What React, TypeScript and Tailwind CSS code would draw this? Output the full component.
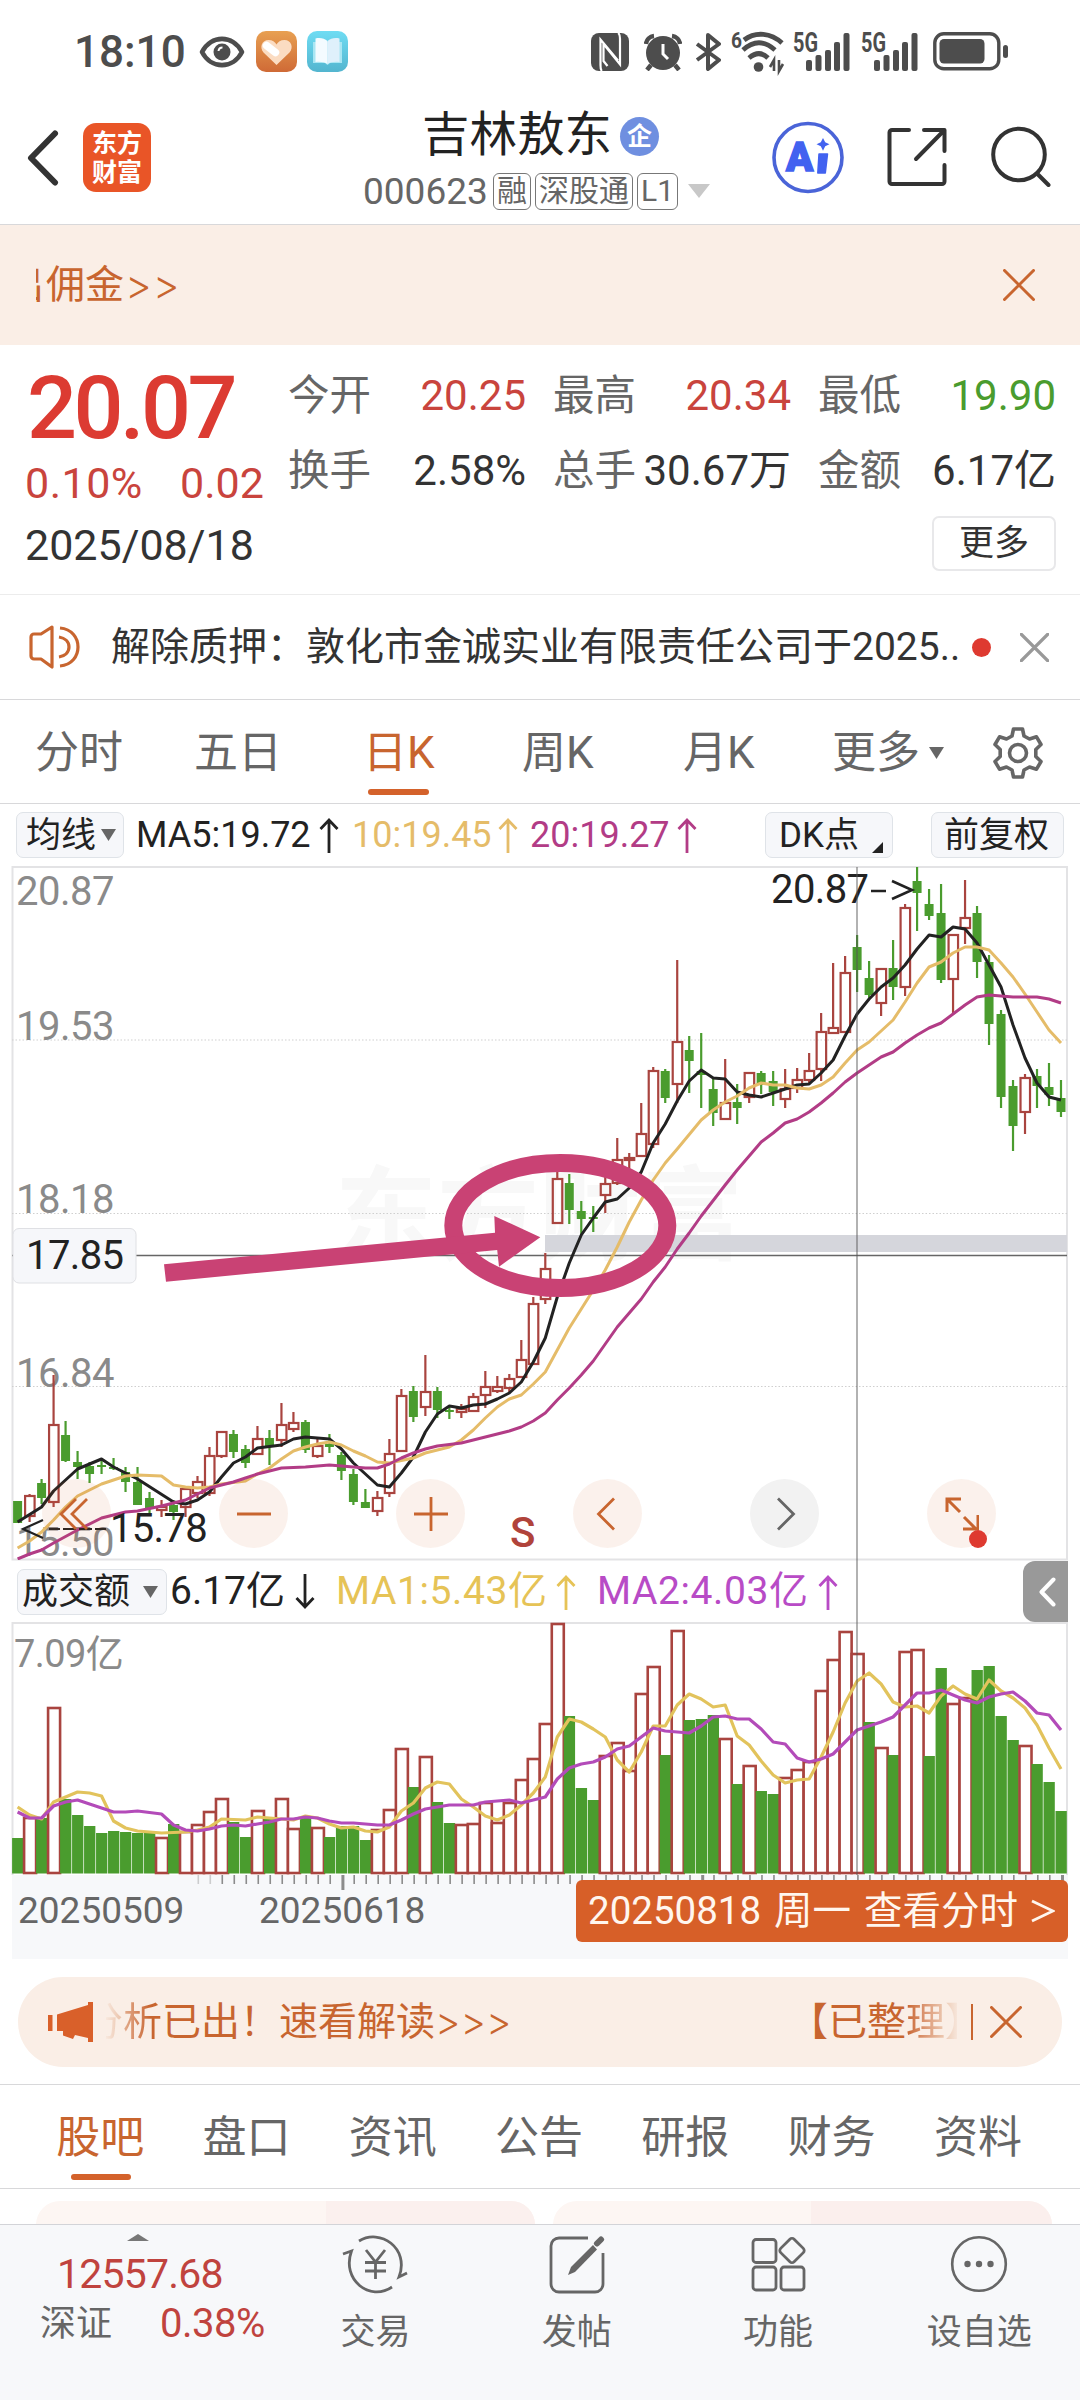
import { clsx } from 'clsx';

type Candle = [up: number, high: number, top: number, bottom: number, low: number];

// one entry per trading day, 1 = rising (hollow red), 0 = falling (solid green)
const candles: Candle[] = [
  [0, 1501, 1501, 1523, 1523], [1, 1494, 1496, 1516, 1522], [0, 1479, 1483, 1498, 1504], [1, 1375, 1425, 1502, 1507],
  [0, 1421, 1435, 1461, 1462], [0, 1451, 1462, 1467, 1479], [0, 1462, 1466, 1474, 1483], [0, 1460, 1465, 1467, 1474],
  [0, 1458, 1467, 1469, 1470], [0, 1467, 1472, 1482, 1492], [0, 1467, 1482, 1505, 1505], [0, 1492, 1498, 1508, 1516],
  [1, 1500, 1507, 1510, 1517], [0, 1500, 1505, 1512, 1520], [1, 1488, 1489, 1507, 1517], [1, 1476, 1482, 1493, 1498],
  [1, 1447, 1456, 1493, 1496], [1, 1432, 1432, 1456, 1458], [0, 1430, 1434, 1452, 1458], [0, 1445, 1449, 1463, 1468],
  [1, 1426, 1439, 1454, 1454], [0, 1430, 1438, 1446, 1465], [1, 1403, 1425, 1440, 1447], [1, 1412, 1423, 1429, 1432],
  [0, 1420, 1422, 1450, 1453], [1, 1438, 1446, 1456, 1458], [0, 1434, 1444, 1447, 1453], [0, 1452, 1455, 1471, 1480],
  [0, 1469, 1474, 1502, 1505], [0, 1489, 1502, 1508, 1508], [1, 1491, 1498, 1511, 1516], [1, 1439, 1454, 1493, 1497],
  [1, 1389, 1396, 1451, 1452], [0, 1386, 1391, 1417, 1422], [1, 1355, 1392, 1407, 1416], [0, 1387, 1391, 1410, 1418],
  [0, 1405, 1410, 1412, 1419], [1, 1404, 1409, 1412, 1418], [1, 1393, 1397, 1411, 1411], [1, 1371, 1387, 1395, 1408],
  [1, 1376, 1387, 1391, 1393], [1, 1374, 1379, 1388, 1392], [1, 1340, 1360, 1377, 1378], [1, 1297, 1304, 1364, 1364],
  [1, 1253, 1269, 1299, 1304], [1, 1170, 1179, 1223, 1223], [0, 1174, 1183, 1210, 1224], [0, 1201, 1211, 1219, 1235],
  [0, 1206, 1217, 1219, 1232], [1, 1177, 1184, 1195, 1213], [1, 1138, 1160, 1183, 1185], [1, 1153, 1158, 1160, 1173],
  [1, 1103, 1134, 1156, 1156], [1, 1067, 1071, 1144, 1148], [0, 1069, 1071, 1098, 1103], [1, 960, 1042, 1084, 1103],
  [0, 1036, 1050, 1061, 1093], [0, 1033, 1071, 1075, 1108], [0, 1077, 1089, 1113, 1126], [1, 1059, 1103, 1119, 1120],
  [0, 1084, 1102, 1108, 1124], [1, 1072, 1073, 1097, 1103], [0, 1071, 1073, 1085, 1094], [0, 1071, 1081, 1092, 1106],
  [1, 1069, 1089, 1099, 1108], [1, 1068, 1080, 1088, 1093], [1, 1053, 1071, 1080, 1083], [1, 1013, 1032, 1069, 1081],
  [1, 963, 1028, 1033, 1033], [1, 956, 973, 1032, 1032], [0, 935, 947, 970, 992], [0, 961, 978, 995, 1000],
  [1, 968, 969, 1003, 1016], [0, 940, 968, 987, 1000], [1, 904, 908, 987, 996], [0, 867, 881, 893, 931],
  [0, 889, 904, 916, 920], [0, 884, 913, 980, 983], [1, 935, 935, 979, 1013], [1, 880, 918, 928, 944],
  [0, 906, 913, 962, 978], [0, 955, 962, 1024, 1045], [0, 1010, 1014, 1097, 1108], [0, 1080, 1086, 1126, 1151],
  [1, 1074, 1078, 1112, 1134], [0, 1069, 1076, 1086, 1108], [0, 1063, 1087, 1095, 1106], [0, 1080, 1098, 1112, 1117],
];

const volumeTops = [
  1838, 1818, 1818, 1708, 1799, 1815, 1826, 1833, 1831, 1832, 1833, 1833, 1838, 1824, 1832, 1825, 1812, 1799, 1822, 1837,
  1811, 1818, 1799, 1829, 1818, 1828, 1837, 1826, 1826, 1840, 1830, 1810, 1749, 1787, 1757, 1802, 1823, 1825, 1824, 1803,
  1823, 1803, 1780, 1759, 1724, 1624, 1716, 1788, 1800, 1756, 1743, 1771, 1694, 1667, 1755, 1631, 1720, 1719, 1715, 1739,
  1784, 1766, 1791, 1794, 1778, 1770, 1762, 1691, 1660, 1632, 1654, 1722, 1748, 1755, 1652, 1650, 1756, 1668, 1704, 1698,
  1670, 1666, 1716, 1740, 1746, 1764, 1782, 1811,
];

// moving averages as [day index, y] pairs
const ma5 = [
  [0, 1522], [2, 1507], [3, 1491], [5, 1469], [7, 1459], [8, 1467], [9, 1473], [10, 1479], [13, 1502], [14, 1504], [15, 1500],
  [16, 1492], [17, 1477], [18, 1463], [19, 1457], [20, 1448], [22, 1445], [23, 1439], [24, 1437], [26, 1439], [27, 1449],
  [28, 1463], [30, 1485], [31, 1487], [32, 1473], [33, 1457], [34, 1432], [35, 1414], [36, 1406], [37, 1408], [38, 1405],
  [39, 1404], [40, 1399], [41, 1393], [42, 1382], [43, 1362], [44, 1338], [45, 1297], [46, 1263], [47, 1235], [48, 1218],
  [49, 1202], [50, 1199], [51, 1188], [52, 1172], [53, 1143], [54, 1124], [55, 1101], [56, 1081], [57, 1070], [58, 1078],
  [59, 1079], [60, 1092], [61, 1095], [62, 1097], [63, 1093], [64, 1089], [65, 1085], [66, 1084], [67, 1073], [68, 1060],
  [69, 1036], [70, 1014], [71, 999], [72, 987], [73, 978], [74, 965], [75, 949], [76, 935], [77, 937], [78, 927], [79, 929],
  [80, 943], [81, 965], [82, 987], [83, 1025], [84, 1058], [85, 1083], [86, 1097], [87, 1100],
];
const ma10 = [
  [0, 1548], [1, 1541], [2, 1532], [3, 1520], [4, 1507], [5, 1496], [7, 1484], [9, 1476], [10, 1475], [12, 1476], [13, 1485],
  [14, 1487], [15, 1488], [16, 1487], [17, 1484], [19, 1481], [20, 1474], [21, 1468], [22, 1459], [23, 1451], [24, 1447],
  [25, 1444], [26, 1442], [27, 1445], [28, 1451], [29, 1456], [30, 1462], [31, 1463], [33, 1458], [34, 1453], [35, 1450],
  [36, 1447], [37, 1440], [38, 1430], [39, 1418], [40, 1407], [41, 1399], [42, 1395], [43, 1384], [44, 1372], [45, 1350],
  [46, 1328], [47, 1309], [48, 1290], [49, 1270], [50, 1247], [51, 1222], [52, 1200], [53, 1180], [54, 1163], [55, 1149],
  [57, 1120], [58, 1110], [59, 1102], [60, 1096], [61, 1088], [62, 1083], [63, 1085], [64, 1085], [65, 1088], [66, 1089],
  [67, 1085], [68, 1077], [69, 1063], [70, 1050], [71, 1042], [72, 1031], [73, 1020], [74, 1002], [75, 983], [76, 967],
  [77, 962], [78, 953], [79, 947], [80, 947], [81, 950], [82, 963], [83, 977], [84, 994], [85, 1012], [86, 1030], [87, 1043],
];
const ma20 = [
  [0, 1559], [1, 1554], [2, 1550], [3, 1543], [5, 1530], [7, 1518], [9, 1512], [10, 1511], [12, 1506], [14, 1500], [16, 1488],
  [18, 1482], [19, 1478], [20, 1474], [22, 1468], [24, 1467], [26, 1465], [28, 1467], [29, 1468], [30, 1468], [31, 1464],
  [32, 1458], [33, 1453], [34, 1449], [35, 1446], [37, 1443], [38, 1440], [39, 1437], [41, 1431], [42, 1427], [43, 1421],
  [44, 1413], [45, 1400], [46, 1388], [47, 1375], [48, 1361], [49, 1344], [50, 1327], [51, 1313], [52, 1299], [53, 1282],
  [54, 1267], [55, 1249], [56, 1233], [57, 1216], [59, 1185], [60, 1170], [62, 1142], [63, 1133], [64, 1123], [65, 1119],
  [66, 1112], [67, 1103], [68, 1093], [69, 1082], [70, 1073], [71, 1065], [72, 1057], [73, 1052], [74, 1043], [75, 1035],
  [76, 1028], [77, 1023], [78, 1014], [79, 1005], [80, 997], [81, 995], [83, 997], [85, 997], [86, 999], [87, 1003],
];
const volMa1 = [
  [0, 1807], [1, 1815], [2, 1819], [3, 1802], [4, 1797], [5, 1792], [6, 1793], [7, 1796], [8, 1821], [9, 1828], [10, 1831],
  [12, 1833], [14, 1832], [15, 1830], [16, 1827], [17, 1819], [19, 1820], [20, 1817], [22, 1819], [23, 1820], [24, 1816],
  [25, 1818], [26, 1824], [27, 1828], [28, 1827], [29, 1831], [30, 1832], [31, 1827], [32, 1811], [33, 1803], [34, 1788],
  [35, 1782], [36, 1784], [37, 1799], [38, 1807], [39, 1816], [40, 1820], [41, 1815], [42, 1805], [43, 1793], [44, 1777],
  [45, 1737], [46, 1719], [47, 1722], [48, 1729], [49, 1737], [50, 1760], [51, 1772], [52, 1752], [53, 1726], [54, 1726],
  [55, 1705], [56, 1694], [57, 1699], [58, 1707], [59, 1705], [60, 1736], [61, 1745], [62, 1761], [63, 1775], [64, 1783],
  [65, 1780], [66, 1779], [67, 1757], [68, 1732], [69, 1703], [70, 1681], [71, 1673], [72, 1684], [73, 1702], [74, 1707],
  [75, 1706], [76, 1713], [77, 1696], [78, 1686], [79, 1694], [80, 1699], [81, 1680], [82, 1691], [83, 1698], [84, 1708],
  [85, 1725], [86, 1748], [87, 1769],
];
const volMa2 = [
  [0, 1812], [1, 1818], [2, 1818], [3, 1806], [4, 1802], [5, 1800], [7, 1808], [8, 1812], [9, 1812], [10, 1811], [12, 1814],
  [13, 1825], [14, 1830], [15, 1831], [16, 1829], [17, 1826], [18, 1825], [19, 1826], [20, 1824], [21, 1822], [22, 1819],
  [23, 1819], [24, 1817], [25, 1818], [26, 1821], [27, 1823], [28, 1823], [30, 1825], [31, 1825], [32, 1820], [33, 1814],
  [34, 1809], [36, 1805], [38, 1805], [39, 1802], [41, 1800], [42, 1803], [43, 1800], [44, 1797], [45, 1779], [46, 1768],
  [47, 1764], [48, 1762], [49, 1757], [50, 1749], [51, 1746], [52, 1737], [53, 1728], [54, 1731], [56, 1733], [57, 1726],
  [58, 1717], [59, 1716], [60, 1719], [61, 1719], [62, 1729], [63, 1742], [64, 1744], [65, 1758], [66, 1762], [67, 1759],
  [68, 1754], [69, 1742], [70, 1730], [71, 1726], [72, 1722], [73, 1717], [74, 1705], [75, 1693], [76, 1693], [77, 1690],
  [78, 1695], [79, 1700], [80, 1703], [81, 1697], [82, 1694], [83, 1692], [84, 1701], [85, 1713], [86, 1715], [87, 1730],
];

const RED = '#a9443f';
const GREEN = '#4a9c2e';
const dayX = (i: number) => 17.6 + i * 11.993;
const toPoints = (line: number[][]) => line.map(([i, y]) => `${dayX(i)},${y}`).join(' ');

function Arrow({ down }: { down?: boolean }) {
  return (
    <svg
      className={clsx('shrink-0', down && 'rotate-180')}
      width="20"
      height="36"
      viewBox="0 0 20 36"
      fill="none"
      stroke="currentColor"
      strokeWidth="2.8"
    >
      <path d="M10 36V3M1.5 12L10 3l8.5 9" />
    </svg>
  );
}

function Triangle({ className }: { className?: string }) {
  return (
    <svg className={className} viewBox="0 0 14 12" fill="currentColor" preserveAspectRatio="none">
      <path d="M0 0h14L7 12z" />
    </svg>
  );
}

function Cross({ size, width = 3 }: { size: number; width?: number }) {
  return (
    <svg width={size} height={size} viewBox="0 0 32 32" fill="none" stroke="currentColor" strokeWidth={width} strokeLinecap="round">
      <path d="M1.5 1.5l29 29M30.5 1.5l-29 29" />
    </svg>
  );
}

function Signal() {
  return (
    <svg className="overflow-visible" width="57" height="40" viewBox="0 0 57 40" fill="#4d4d4d">
      <text x="0" y="20" fontSize="27" fontWeight="700" textLength="25" lengthAdjust="spacingAndGlyphs">5G</text>
      <rect x="13" y="28" width="6" height="11" rx="2" />
      <rect x="22.5" y="23" width="6" height="16" rx="2" />
      <rect x="32" y="18" width="6" height="21" rx="2" />
      <rect x="41" y="10" width="6" height="29" rx="2" />
      <rect x="50.5" y="1" width="6" height="38" rx="2" />
    </svg>
  );
}

function StatusBar() {
  return (
    <div className="flex h-[103px] items-center pl-[74px] text-[#4d4d4d]">
      <span className="w-[125px] text-[44px] leading-none font-medium">18:10</span>
      <svg width="46" height="32" viewBox="0 0 46 32" fill="none" stroke="#4d4d4d" strokeWidth="4.6">
        <path d="M3 16C12 -1.500 34 -1.500 43 16C34 33.500 12 33.500 3 16z" strokeLinejoin="round" />
        <circle cx="23" cy="16" r="8.500" fill="#4d4d4d" stroke="none" />
        <path d="M19.500 15a4 4 0 0 1 4 -3.500" stroke="#fff" strokeWidth="2" />
      </svg>
      <svg className="ml-[11px]" width="41" height="41" viewBox="0 0 41 41">
        <defs>
          <linearGradient id="heartBg" x2="0" y2="1">
            <stop stopColor="#e8a052" />
            <stop offset="1" stopColor="#cf6a36" />
          </linearGradient>
          <linearGradient id="bookBg" x2="0" y2="1">
            <stop stopColor="#6fdcf3" />
            <stop offset="1" stopColor="#53b5cf" />
          </linearGradient>
        </defs>
        <rect width="41" height="41" rx="10" fill="url(#heartBg)" />
        <path d="M20.500 34L7.500 21.500C3 16 6 9 12.500 9c4 0 6.500 2 8 4.500C22 11 24.500 9 28.500 9C35 9 38 16 33.500 21.500z" fill="#fbdcc2" />
        <path d="M10.500 14.500l9 7" stroke="#fff" strokeWidth="7.500" strokeLinecap="round" />
      </svg>
      <svg className="ml-[10px]" width="41" height="41" viewBox="0 0 41 41">
        <rect width="41" height="41" rx="10" fill="url(#bookBg)" />
        <path d="M6 11h29v21H23l-2.500 2L18 32H6z" fill="#a9e6f3" />
        <path d="M8.500 7.500c5-1 9 0 12 2.500v23c-3-2-7-2.500-12-2z" fill="#f4fbff" />
        <path d="M32.500 7.500c-5-1-9 0-12 2.500v23c3-2 7-2.500 12-2z" fill="#dff0fb" />
      </svg>

      <svg className="ml-[243px]" width="38" height="38" viewBox="0 0 38 38">
        <rect width="38" height="38" rx="8" fill="#4d4d4d" />
        <path d="M9.500 32V6.500L27 27.500M11 38c-1.500-1-1.500-2-1.500-6M29 6v25.500L12.500 11V28l4 5M27 0c2 1 2 3 2 6" fill="none" stroke="#fff" strokeWidth="2.200" />
      </svg>
      <svg className="ml-[15px]" width="38" height="38" viewBox="0 0 38 38" fill="none" stroke="#4d4d4d">
        <circle cx="19" cy="20" r="17" fill="#4d4d4d" stroke="none" />
        <path d="M2 11a9 9 0 0 1 8-8M36 11a9 9 0 0 0-8-8" strokeWidth="4.500" />
        <path d="M7 32l-4 5M31 32l4 5" strokeWidth="4.500" />
        <path d="M19 11v10l5 5" stroke="#fff" strokeWidth="3" />
      </svg>
      <svg className="ml-[13px]" width="26" height="38" viewBox="0 0 26 38" fill="none" stroke="#4d4d4d" strokeWidth="4" strokeLinejoin="round">
        <path d="M2 11l22 16l-11 9V2l11 9L2 27" />
      </svg>
      <svg className="ml-[10px] overflow-visible" width="54" height="42" viewBox="0 0 54 42" fill="none" stroke="#4d4d4d" strokeWidth="4.800">
        <text x="0" y="17" fontSize="22" fontWeight="700" fill="#4d4d4d" stroke="none" textLength="11" lengthAdjust="spacingAndGlyphs">6</text>
        <path d="M13 9C25 0 40 2 51 12M12 19c11-10 22-9 32 0M18 27c7-6 13-6 19 0" />
        <circle cx="27.500" cy="36" r="4.800" fill="#4d4d4d" stroke="none" />
        <path d="M43 40V29l-4 7M48 29v11l4-7" strokeWidth="2.600" />
      </svg>
      <div className="ml-[8px] flex gap-[11px]">
        <Signal />
        <Signal />
      </div>
      <svg className="ml-[15px]" width="76" height="40" viewBox="0 0 76 40">
        <rect x="1.800" y="1.800" width="64" height="35" rx="9" fill="none" stroke="#4d4d4d" strokeWidth="3.400" />
        <rect x="6.500" y="7" width="45" height="24.500" rx="4.500" fill="#4d4d4d" />
        <rect x="70" y="13" width="5" height="13" rx="2.500" fill="#4d4d4d" />
      </svg>
    </div>
  );
}

function Tag({ children }: { children: string }) {
  return (
    <span className="flex h-[37px] items-center rounded-[6px] border border-[#777] px-[3px] text-[30px] leading-none">
      {children}
    </span>
  );
}

function NavBar() {
  return (
    <div className="flex h-[122px] border-b border-[#d8d8da]">
      <svg className="mt-[27px] ml-[26px]" width="33" height="56" viewBox="0 0 33 56" fill="none" stroke="#333" strokeWidth="6">
        <path d="M29 3.500L5 28l24 24.500" strokeLinecap="round" strokeLinejoin="round" />
      </svg>
      <div className="mt-[20px] ml-[24px] flex h-[69px] w-[68px] flex-col items-center justify-center rounded-[13px] bg-[#e95527] text-[25px] leading-[29px] font-bold text-white">
        <span>东方</span>
        <span>财富</span>
      </div>
      <div className="ml-[211px] w-[360px]">
        <div className="mt-[4px] flex h-[58px] items-center justify-start pl-[60px]">
          <span className="text-[47.500px] leading-none text-[#222]">吉林敖东</span>
          <span className="ml-[8px] flex h-[39px] w-[39px] items-center justify-center rounded-full bg-[#6f8fe0] text-[25px] leading-none font-bold text-white">
            企
          </span>
        </div>
        <div className="mt-[7px] flex h-[38px] items-center gap-[4px] text-[#666]">
          <span className="mr-[2px] w-[125px] pl-[1px] text-[37px] leading-none">000623</span>
          <Tag>融</Tag>
          <Tag>深股通</Tag>
          <Tag>L1</Tag>
          <Triangle className="ml-[6px] h-[14px] w-[22px] text-[#c8c8c8]" />
        </div>
      </div>
      <svg className="mt-[18px] ml-[50px] overflow-visible" width="72" height="73" viewBox="0 0 72 73">
        <circle cx="36" cy="36.500" r="34" fill="none" stroke="#4a64d8" strokeWidth="3.600" />
        <text x="14" y="50" fontSize="40" fontWeight="900" fill="#4262f0" stroke="#4262f0" strokeWidth="1.500">A</text>
        <path d="M47 33h8.500l-2.200 19h-7.500z" fill="#4262f0" stroke="#4262f0" strokeWidth="1.500" strokeLinejoin="round" />
        <path d="M51 17l2.200 4.200l4.300 2l-4.300 2l-2.200 4.500l-2.200-4.500l-4.300-2l4.300-2z" fill="#4262f0" />
      </svg>
      <svg className="mt-[24px] ml-[43px]" width="60" height="60" viewBox="0 0 60 60" fill="none" stroke="#333" strokeWidth="4" strokeLinecap="round" strokeLinejoin="round">
        <path d="M22 3H5a2.500 2.500 0 0 0-2.500 2.500v49A2.500 2.500 0 0 0 5 57h50a2.500 2.500 0 0 0 2.500-2.500V38M37 3h20.500v21M57 3.500L29 32" />
      </svg>
      <svg className="mt-[22px] ml-[43px]" width="62" height="62" viewBox="0 0 62 62" fill="none" stroke="#333" strokeWidth="4" strokeLinecap="round">
        <circle cx="29" cy="29.500" r="25.800" />
        <path d="M47.500 49l11 11" />
      </svg>
    </div>
  );
}

const quotes = [
  { label: '今开', value: '20.25', color: 'text-[#c9443d]' },
  { label: '最高', value: '20.34', color: 'text-[#c9443d]' },
  { label: '最低', value: '19.90', color: 'text-[#4a9c2e]' },
  { label: '换手', value: '2.58%', color: 'text-[#333]' },
  { label: '总手', value: '30.67万', color: 'text-[#333]' },
  { label: '金额', value: '6.17亿', color: 'text-[#333]' },
];

function Quote() {
  return (
    <div className="flex h-[250px] border-b border-[#ececec] pl-[25px]">
      <div className="w-[263px]">
        <div className="flex h-[124px] items-center pt-[2px] pl-[2px] text-[88px] leading-none font-medium tracking-[-3.500px] text-[#dc3b32]">
          20.07
        </div>
        <div className="flex h-[29px] items-center text-[43px] leading-none text-[#c9443d]">
          <span className="w-[155px] tracking-[0.500px]">0.10%</span>
          <span>0.02</span>
        </div>
        <div className="flex h-[95px] items-center text-[43px] leading-none text-[#333]">2025/08/18</div>
      </div>
      <div className="w-[768px]">
        <div className="grid grid-cols-3 gap-x-[27px]">
          {quotes.map((q, i) => (
            <div key={q.label} className={clsx('flex items-center justify-between leading-none whitespace-nowrap', i < 3 ? 'h-[101px]' : 'h-[50px]')}>
              <span className="text-[41.500px] text-[#666]">{q.label}</span>
              <span className={clsx('text-[42px]', q.color)}>{q.value}</span>
            </div>
          ))}
        </div>
        <button className="mt-[20px] ml-[644px] flex h-[55px] w-[124px] items-center justify-center rounded-[7px] border-2 border-[#e8e8ea] text-[35px] leading-none text-[#333]">
          更多
        </button>
      </div>
    </div>
  );
}

function Notice() {
  return (
    <div className="flex h-[105px] items-center border-b border-[#d8d8da] pl-[29px]">
      <svg width="52" height="44" viewBox="0 0 52 44" fill="none" stroke="#c8652f" strokeWidth="3.200" strokeLinejoin="round">
        <path d="M23 2L12 9H5a3 3 0 0 0-3 3v19a3 3 0 0 0 3 3h7l11 8z" />
        <path d="M31 3c12 1 18 10 18 19s-6 18-18 19M30 12c6 1 10 5 10 10s-4 9-10 10" />
      </svg>
      <span className="ml-[30px] w-[861px] text-[39px] leading-none whitespace-nowrap text-[#333]">
        解除质押：敦化市金诚实业有限责任公司于2025..
      </span>
      <span className="h-[19px] w-[19px] shrink-0 rounded-full bg-[#de3a30]" />
      <span className="ml-[29px] text-[#999]">
        <Cross size={29} width={3.8} />
      </span>
    </div>
  );
}

function PeriodTabs() {
  return (
    <div className="flex h-[104px] items-center border-b border-[#d8d8da] pt-[2px] pl-[35px] text-[44px] leading-none text-[#666]">
      <span className="w-[159px]">分时</span>
      <span className="w-[169px]">五日</span>
      <span className="relative w-[159px] text-[#c8652f]">
        日K
        <span className="absolute top-[58px] left-[5px] h-[6px] w-[61px] rounded-full bg-[#d4622b]" />
      </span>
      <span className="w-[161px]">周K</span>
      <span className="w-[149px]">月K</span>
      <span>更多</span>
      <Triangle className="ml-[9px] h-[12px] w-[15px] text-[#666]" />
      <svg className="ml-[48px]" width="52" height="52" viewBox="0 0 52 52" fill="none" stroke="#666" strokeWidth="3.600" strokeLinejoin="round">
        <path d="M21.500 2h9l1.500 7l5.500 3l7-2.200l4.500 7.700l-5.200 5v7l5.200 5l-4.500 7.700l-7-2.200l-5.500 3l-1.500 7h-9l-1.500-7l-5.500-3l-7 2.200l-4.500-7.700l5.200-5v-7l-5.200-5l4.500-7.700l7 2.200l5.500-3z" />
        <circle cx="26" cy="26" r="8.500" />
      </svg>
    </div>
  );
}

function MaRow() {
  const chip = 'flex h-[46px] shrink-0 items-center rounded-[7px] border border-[#dfe3e8] bg-[#f6f7fa] text-[35px] text-[#222]';
  return (
    <div className="flex h-[62px] items-center pl-[16px] text-[36px] leading-none whitespace-nowrap">
      <div className={clsx(chip, 'w-[108px] pl-[9px]')}>
        均线
        <Triangle className="ml-[5px] h-[12px] w-[15px] text-[#666]" />
      </div>
      <div className="ml-[12px] flex w-[216px] items-center text-[#222]">
        <span className="w-[183px]">MA5:19.72</span>
        <Arrow />
      </div>
      <div className="flex w-[178px] items-center text-[#e5bc69]">
        <span className="w-[146px]">10:19.45</span>
        <Arrow />
      </div>
      <div className="flex w-[235px] items-center text-[#b23c86]">
        <span className="w-[147px]">20:19.27</span>
        <Arrow />
      </div>
      <div className={clsx(chip, 'w-[128px] pl-[13px]')}>
        DK点
        <svg className="mt-[24px] ml-[13px]" width="11" height="11" viewBox="0 0 11 11">
          <path d="M11 0v11H0z" fill="#222" />
        </svg>
      </div>
      <div className={clsx(chip, 'ml-[38px] w-[133px] pl-[12px]')}>前复权</div>
    </div>
  );
}

function KLineChart() {
  return (
    <svg className="ml-[11px] block overflow-visible" width="1058" height="695" viewBox="11 866 1058 695">
      <defs>
        <clipPath id="plot">
          <rect x="12" y="866" width="1056" height="694" />
        </clipPath>
      </defs>
      <text x="335" y="1252" fontSize="102" fontWeight="700" fill="#f8f8f8">东方财富</text>
      <rect x="12.500" y="867" width="1054.500" height="692.500" fill="none" stroke="#e3e3e5" strokeWidth="2" />
      {[1040, 1213.5, 1386.5].map((y) => (
        <line key={y} x1="12" x2="1067" y1={y} y2={y} stroke="#cfcfcf" strokeDasharray="1.500 2" />
      ))}

      <g fontSize="40" fill="#8a8a8a" letterSpacing="-0.500">
        <text x="16" y="904.500">20.87</text>
        <text x="16" y="1040">19.53</text>
        <text x="16" y="1213">18.18</text>
        <text x="16" y="1386.500">16.84</text>
        <text x="16" y="1555.500">15.50</text>
      </g>

      {/* gap zone left open by the jump */}
      <rect x="545" y="1235" width="522" height="17" fill="#d5d6dc" />
      <line x1="12" x2="1067" y1="1255.500" y2="1255.500" stroke="#666" strokeWidth="1.400" />

      <g clipPath="url(#plot)">
        {candles.map(([up, high, top, bottom, low], i) => {
          const x = dayX(i);
          const color = up ? RED : GREEN;
          return (
            <g key={i} stroke={color} strokeWidth="2.200">
              <line x1={x} x2={x} y1={high} y2={top} />
              <line x1={x} x2={x} y1={bottom} y2={low} />
              {up ? (
                <rect x={x - 4.5} y={top} width="9.500" height={bottom - top} fill="none" />
              ) : (
                <rect x={x - 4.5} y={top} width="9" height={bottom - top} fill={color} stroke="none" />
              )}
            </g>
          );
        })}
        <g fill="none" strokeWidth="3" strokeLinejoin="round">
          <polyline points={toPoints(ma5)} stroke="#222" />
          <polyline points={toPoints(ma10)} stroke="#e5bc69" />
          <polyline points={toPoints(ma20)} stroke="#b23c86" />
        </g>
      </g>

      <g fontSize="40" fill="#222">
        <text x="771" y="903" letterSpacing="-0.600">20.87</text>
        <path d="M871 891h15M892 881l20 9l-20 9" fill="none" stroke="#222" strokeWidth="2.600" />
        <path d="M43 1520l-20 9l20 9M49 1529h11M63 1529h13M79 1529h13M95 1529h11" fill="none" stroke="#222" strokeWidth="2.200" />
        <text x="110" y="1542" letterSpacing="-0.700">15.78</text>
      </g>
      <text x="510" y="1547" fontSize="42" fontWeight="500" fill="#b0433b">S</text>

      <rect x="13" y="1228.500" width="123" height="54.500" rx="6" fill="#f6f7fa" stroke="#dfe0e4" />
      <text x="26" y="1269" fontSize="40" fill="#222" letterSpacing="-0.600">17.85</text>

      <g fill="#c94274">
        <ellipse cx="560.300" cy="1225.500" rx="107" ry="62.500" fill="none" stroke="#c94274" strokeWidth="18" />
        <path d="M164 1264.300L495 1232.700L494.300 1216L540.300 1237.300L499 1266.700L497.200 1250L166 1281.700z" />
      </g>
    </svg>
  );
}

function ChartControls() {
  const circle = 'flex h-[69px] w-[69px] items-center justify-center rounded-full bg-[#d76428]/9';
  return (
    <div className="absolute top-[613px] left-[42px] flex gap-[108px] text-[#c8652f]">
      <div className={circle}>
        <svg className="mr-[5px]" width="30" height="34" viewBox="0 0 30 34" fill="none" stroke="currentColor" strokeWidth="2.800">
          <path d="M17 2L2 17l15 15M28 2L13 17l15 15" />
        </svg>
      </div>
      <div className={circle}>
        <svg width="34" height="34" viewBox="0 0 34 34" stroke="currentColor" strokeWidth="2.800">
          <path d="M0 17h34" />
        </svg>
      </div>
      <div className={circle}>
        <svg width="34" height="34" viewBox="0 0 34 34" stroke="currentColor" strokeWidth="2.800">
          <path d="M0 17h34M17 0v34" />
        </svg>
      </div>
      <div className={circle}>
        <svg className="mr-[3px]" width="20" height="34" viewBox="0 0 20 34" fill="none" stroke="currentColor" strokeWidth="2.800">
          <path d="M18 1.500L2.500 17L18 32.500" />
        </svg>
      </div>
      <div className="flex h-[69px] w-[69px] items-center justify-center rounded-full bg-[#f2f2f2]">
        <svg className="ml-[3px]" width="20" height="34" viewBox="0 0 20 34" fill="none" stroke="#666" strokeWidth="2.800">
          <path d="M2 1.500L17.500 17L2 32.500" />
        </svg>
      </div>
      <div className={clsx(circle, 'relative')}>
        <svg width="34" height="34" viewBox="0 0 34 34" fill="none" stroke="currentColor" strokeWidth="3">
          <path d="M2 15V2h14M2 2l13 13M19 20l13 13M33 18v14H18" />
        </svg>
        <span className="absolute top-[51px] left-[42px] h-[18px] w-[18px] rounded-full bg-[#de3a30]" />
      </div>
    </div>
  );
}

function VolumeHeader() {
  return (
    <div className="flex h-[61px] items-center pl-[17px] text-[39px] leading-none whitespace-nowrap">
      <div className="flex h-[46px] w-[150px] items-center rounded-[7px] border border-[#dfe3e8] bg-[#f6f7fa] pl-[4px] text-[36px] text-[#222]">
        成交额
        <Triangle className="ml-[13px] h-[12px] w-[15px] text-[#666]" />
      </div>
      <div className="ml-[3px] flex w-[166px] items-center text-[#222]">
        <span className="w-[125px]">6.17亿</span>
        <Arrow down />
      </div>
      <div className="flex w-[261px] items-center text-[#e6c356]">
        <span className="w-[220px] tracking-[0.600px]">MA1:5.43亿</span>
        <Arrow />
      </div>
      <div className="flex w-[426px] items-center text-[#b84bc6]">
        <span className="w-[221px] tracking-[0.600px]">MA2:4.03亿</span>
        <Arrow />
      </div>
      <div className="flex h-[61px] w-[45px] items-center justify-center rounded-l-[12px] bg-[#999]">
        <svg className="ml-[3px]" width="17" height="30" viewBox="0 0 17 30" fill="none" stroke="#fff" strokeWidth="4" strokeLinecap="round" strokeLinejoin="round">
          <path d="M14.500 2.500L2.500 15l12 12.500" />
        </svg>
      </div>
    </div>
  );
}

function VolumeChart() {
  return (
    <svg className="ml-[11px] block" width="1058" height="253" viewBox="11 1622 1058 253">
      <path d="M12.500 1875V1623H1067V1875" fill="none" stroke="#e3e3e5" strokeWidth="2" />
      <text x="14" y="1667" fontSize="38" fill="#8a8a8a" letterSpacing="-0.600">7.09亿</text>
      {volumeTops.map((top, i) => {
        const x = dayX(i);
        const up = candles[i][0] === 1 || i === 70 || i === 75;
        return up ? (
          <rect key={i} x={x - 5.5} y={top} width="12" height={1873 - top} fill="#fff" stroke={RED} strokeWidth="2.600" />
        ) : (
          <rect key={i} x={x - 5.5} y={top} width="11.300" height={1873.5 - top} fill={GREEN} />
        );
      })}
      <g fill="none" strokeWidth="3.200" strokeLinejoin="round">
        <polyline points={toPoints(volMa1)} stroke="#e2c35c" />
        <polyline points={toPoints(volMa2)} stroke="#b34bb9" />
      </g>
    </svg>
  );
}

function TimeAxis() {
  return (
    <div className="mx-[12px] flex h-[84px] items-start bg-[#f7f8fa] text-[37px] leading-none text-[#666]">
      <div className="relative w-full">
        <svg className="block" width="1056" height="16" viewBox="12 0 1056 16" fill="#8c8c8c">
          {Array.from({ length: 73 }, (_, k) => k + 15).map((i) => {
            const major = i === 27 || i === 57 || i === 87;
            return <rect key={i} x={dayX(i)} y="0" width={major ? 3 : 1.6} height={major ? 15 : 9} opacity={i < 17 ? 0.4 : 1} />;
          })}
        </svg>
        <div className="flex pl-[6px]">
          <span className="mt-[2px] flex h-[34px] w-[241px] items-center">20250509</span>
          <span className="mt-[2px] flex h-[34px] items-center">20250618</span>
        </div>
        <div className="absolute top-[5px] right-[0px] flex h-[62px] w-[492px] items-center rounded-[6px] bg-[#d75f28] pl-[12px] text-[38.500px] whitespace-nowrap text-[#fff6ee]">
          <span className="w-[186px]">20250818</span>
          <span className="w-[90px]">周一</span>
          <span className="w-[167px]">查看分时</span>
          <svg width="24" height="24" viewBox="0 0 24 24" fill="none" stroke="currentColor" strokeWidth="2.800">
            <path d="M1 2l21 10L1 22" />
          </svg>
        </div>
      </div>
    </div>
  );
}

function NewsPill() {
  return (
    <div className="mx-[18px] mt-[18px] flex h-[90px] items-center rounded-full bg-[#faeee6] pl-[29px] text-[39px] leading-[60px] whitespace-nowrap text-[#c8652f]">
      <svg width="47" height="40" viewBox="0 0 47 40" fill="#d9602a">
        <path d="M1 13h4.500v16H1zM10 12.500L41 3V0h5v40h-5v-4l-13-3l-2 4l-10-3.500V29h-6z" />
      </svg>
      <div className="ml-[12px] flex w-[420px] overflow-hidden">
        <span className="-ml-[22px] w-[39px] bg-linear-to-r from-[#faeee6] from-50% to-[#e9bfa5] bg-clip-text text-transparent">分</span>
        <span className="bg-linear-to-r from-[#e2ad8e] to-[#c8652f] to-70% bg-clip-text text-transparent">析</span>
        <span>已出！速看解读</span>
        <span className="font-['Inter'] text-[39px] font-light">&gt;&gt;&gt;</span>
      </div>
      <div className="ml-[280px] flex w-[151px] overflow-hidden">
        <span className="-ml-[17px]">【已整</span>
        <span className="bg-linear-to-r from-[#c8652f] to-[#eccab4] bg-clip-text text-transparent">理</span>
        <span className="bg-linear-to-r from-[#eccab4] to-[#faeee6] to-40% bg-clip-text text-transparent">】</span>
      </div>
      <span className="ml-[14px] h-[36px] w-[1.500px] bg-[#c8652f]" />
      <span className="ml-[17px]">
        <Cross size={32} width={3} />
      </span>
    </div>
  );
}

const sections = ['股吧', '盘口', '资讯', '公告', '研报', '财务', '资料'];

function SectionTabs() {
  return (
    <div className="mt-[17px] flex h-[105px] items-center border-y border-[#d8d8da] pt-[2px] pl-[27px] text-[44px] leading-none text-[#666]">
      {sections.map((name, i) => (
        <span key={name} className={clsx('relative flex w-[146.300px] justify-center', i === 0 && 'text-[#c8652f]')}>
          {name}
          {i === 0 && <span className="absolute top-[58px] left-[44px] h-[6px] w-[60px] rounded-full bg-[#d4622b]" />}
        </span>
      ))}
    </div>
  );
}

function CardTops() {
  return (
    <div className="flex h-[35px] gap-[18px] overflow-hidden px-[36px] pt-[12px]">
      <div className="flex h-[80px] w-[499px] shrink-0 overflow-hidden rounded-t-[24px] bg-[#fdf6f3]">
        <div className="ml-[290px] flex-1 bg-[#fbf0ee]" />
      </div>
      <div className="flex h-[80px] w-[499px] shrink-0 overflow-hidden rounded-t-[24px] bg-[#fdf6f3]">
        <div className="ml-[258px] flex-1 bg-[#fbefed]" />
      </div>
    </div>
  );
}

function BottomBar() {
  const item = 'flex w-[201.500px] flex-col items-center text-[35px] leading-none text-[#666]';
  return (
    <div className="flex h-[176px] border-t border-[#d3d4d8] bg-[#f7f8fa]">
      <div className="w-[275px]">
        <Triangle className="mt-[9px] ml-[127px] h-[7px] w-[22px] rotate-180 text-[#777]" />
        <div className="mt-[13px] flex h-[40px] items-center pl-[57px] text-[41px] leading-none tracking-[-0.800px] text-[#c0433e]">12557.68</div>
        <div className="mt-[10px] flex h-[40px] items-center pl-[40px] leading-none">
          <span className="w-[120px] text-[36px] text-[#666]">深证</span>
          <span className="text-[40px] tracking-[-0.500px] text-[#c0433e]">0.38%</span>
        </div>
      </div>
      <div className={item}>
        <svg className="mt-[9px] mb-[21px]" width="66" height="60" viewBox="0 0 66 60" fill="none" stroke="#666" strokeWidth="2.800">
          <path d="M17 7C38 -6 68 14 57 43l8-4M50 53C28 68-1 46 9.500 17L1 20" />
          <path d="M24 16l9.500 12L43 16M33.500 28v17M23 28.500h21M23 37h21" />
        </svg>
        交易
      </div>
      <div className={item}>
        <svg className="mt-[10px] mb-[21px]" width="56" height="59" viewBox="0 0 56 59" fill="none" stroke="#666" strokeWidth="2.800">
          <path d="M39 3H10a8 8 0 0 0-8 8v38a8 8 0 0 0 8 8h36a8 8 0 0 0 8-8V18" />
          <path d="M19 40l3-8L44 10l4 4.500L26 37z" fill="#666" stroke="none" />
          <path d="M48 8.500l4-4" strokeWidth="6" strokeLinecap="round" />
        </svg>
        发帖
      </div>
      <div className={item}>
        <svg className="mt-[11px] mb-[22px]" width="56" height="57" viewBox="0 0 56 57" fill="none" stroke="#666" strokeWidth="2.800">
          <rect x="3" y="3.500" width="23" height="23" rx="3" />
          <rect x="3" y="31" width="23" height="23" rx="3" />
          <rect x="31" y="31" width="23" height="23" rx="3" />
          <rect x="32.500" y="5" width="19" height="19" rx="3" transform="rotate(45 42 14.500)" />
        </svg>
        功能
      </div>
      <div className={item}>
        <svg className="mt-[10px] mb-[22px]" width="58" height="58" viewBox="0 0 58 58" fill="#666">
          <circle cx="29" cy="29" r="26.800" fill="none" stroke="#666" strokeWidth="2.600" />
          <circle cx="17.500" cy="29" r="3.200" />
          <circle cx="29" cy="29" r="3.200" />
          <circle cx="40.500" cy="29" r="3.200" />
        </svg>
        设自选
      </div>
    </div>
  );
}

export default function App() {
  return (
    <main className="h-[2400px] w-[1080px] overflow-hidden bg-white font-['Roboto','Noto_Sans_CJK_SC',sans-serif]">
      <StatusBar />
      <NavBar />
      <div className="flex h-[120px] items-center bg-[#faeee6] pl-[36px] text-[39px] leading-[60px] text-[#c8652f]">
        <span className="flex w-[9px] justify-end overflow-hidden">
          <span className="shrink-0 pr-[1px]">出</span>
        </span>
        <span className="pl-[1px] whitespace-nowrap">佣金</span>
        <span className="ml-[1px] w-[871px] font-['Inter'] text-[41px] font-light tracking-[1px]">&gt;&gt;</span>
        <span className="ml-[7px]">
          <Cross size={32} width={3} />
        </span>
      </div>
      <Quote />
      <Notice />
      <PeriodTabs />
      <MaRow />
      <div className="relative">
        <KLineChart />
        <ChartControls />
        <VolumeHeader />
        <VolumeChart />
        {/* crosshair */}
        <div className="absolute top-[1px] left-[856px] h-[1008px] w-[2px] bg-[#555]/45" />
      </div>
      <TimeAxis />
      <NewsPill />
      <SectionTabs />
      <CardTops />
      <BottomBar />
    </main>
  );
}
